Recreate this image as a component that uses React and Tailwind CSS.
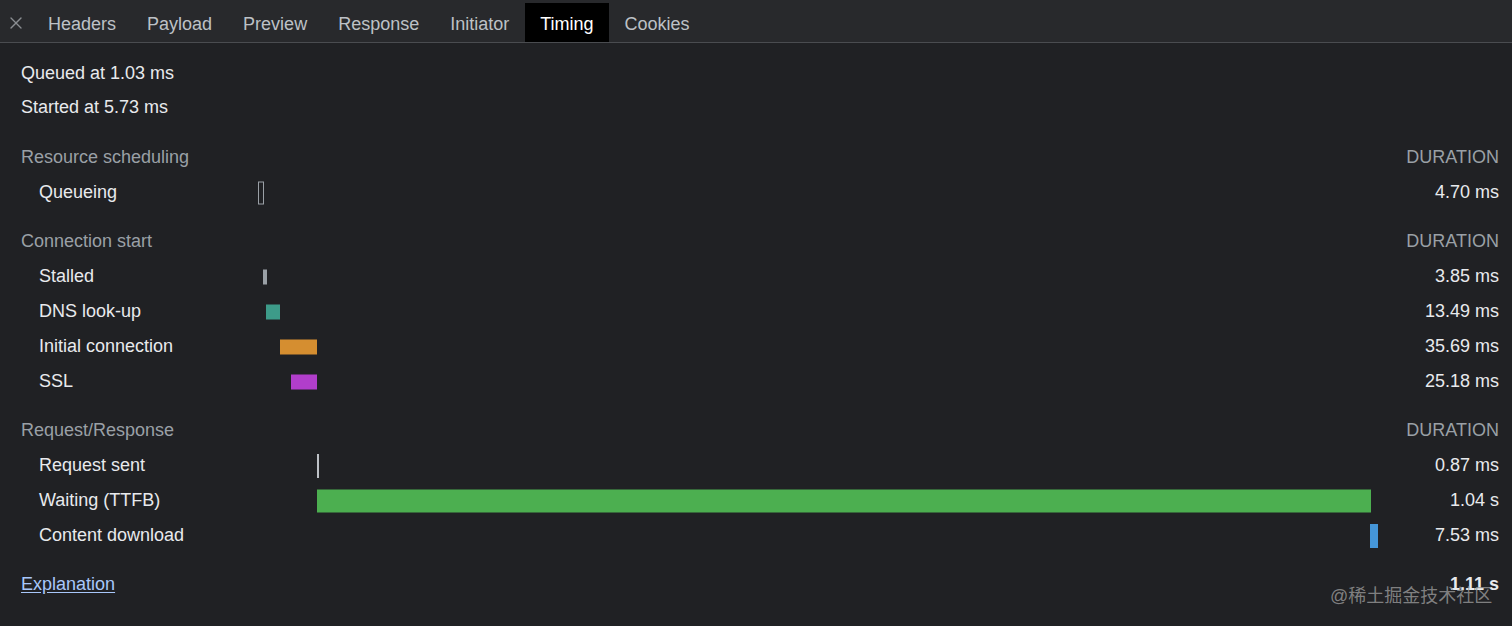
import { X } from "lucide-react";

const tabs = ["Headers", "Payload", "Preview", "Response", "Initiator", "Timing", "Cookies"];

const sections = [
  {
    title: "Resource scheduling",
    rows: [
      { label: "Queueing", dur: "4.70 ms", left: 0, width: 5.5, h: 23, kind: "hollow" },
    ],
  },
  {
    title: "Connection start",
    rows: [
      { label: "Stalled", dur: "3.85 ms", left: 5, width: 4, h: 15, color: "#9aa0a6" },
      { label: "DNS look-up", dur: "13.49 ms", left: 8, width: 14, h: 15, color: "#3d9b89" },
      { label: "Initial connection", dur: "35.69 ms", left: 22, width: 37, h: 15, color: "#d58e30" },
      { label: "SSL", dur: "25.18 ms", left: 33, width: 26, h: 15, color: "#b13ecb" },
    ],
  },
  {
    title: "Request/Response",
    rows: [
      { label: "Request sent", dur: "0.87 ms", left: 59, width: 1.5, h: 24, color: "#bdc1c6" },
      { label: "Waiting (TTFB)", dur: "1.04 s", left: 59, width: 1054, h: 23, color: "#4caf50" },
      { label: "Content download", dur: "7.53 ms", left: 1112, width: 8, h: 24, color: "#4596d8" },
    ],
  },
];

function Bar({ row }) {
  if (row.kind === "hollow") {
    return (
      <div
        className="absolute top-1/2 -translate-y-1/2 border border-[#9aa0a6]"
        style={{ left: row.left, width: row.width, height: row.h }}
      />
    );
  }
  return (
    <div
      className="absolute top-1/2 -translate-y-1/2"
      style={{ left: row.left, width: row.width, height: row.h, background: row.color }}
    />
  );
}

export default function App() {
  return (
    <div className="w-[1512px] h-[626px] bg-[#202124] text-[18px] text-[#e8eaed] font-['Liberation_Sans',Arial,sans-serif] overflow-hidden relative">
      <div className="h-[43px] flex items-end bg-[#28292c] border-b border-[#4a4c50]">
        <div className="w-[32.5px] h-[39px] pt-[1px] flex items-center justify-center text-[#8a8d91]">
          <X size={20} strokeWidth={1.6} />
        </div>
        {tabs.map((t) => (
          <div
            key={t}
            className={
              t === "Timing"
                ? "h-[39px] pt-[3px] px-[15.5px] flex items-center bg-black text-white"
                : "h-[39px] pt-[3px] px-[15.5px] flex items-center text-[#bdc1c6]"
            }
          >
            {t}
          </div>
        ))}
      </div>

      <div className="pl-[21px] pr-[13px] pt-[13px]">
        <div className="h-[34px] flex items-center">Queued at 1.03 ms</div>
        <div className="h-[34px] flex items-center">Started at 5.73 ms</div>

        {sections.map((s, i) => (
          <div key={s.title} className={i === 0 ? "mt-[16px]" : "mt-[14px]"}>
            <div className="h-[35px] flex items-center justify-between text-[#9aa0a6]">
              <span>{s.title}</span>
              <span>DURATION</span>
            </div>
            {s.rows.map((r) => (
              <div key={r.label} className="h-[35px] flex items-center">
                <div className="w-[237px] pl-[18px]">{r.label}</div>
                <div className="w-[1120px] h-full relative">
                  <Bar row={r} />
                </div>
                <div className="flex-1 text-right">{r.dur}</div>
              </div>
            ))}
          </div>
        ))}

        <div className="mt-[14px] h-[35px] flex items-center justify-between">
          <a href="#" className="text-[#a8c7fa] underline underline-offset-2">
            Explanation
          </a>
          <span className="font-bold">1.11 s</span>
        </div>
      </div>

      <div className="absolute left-[1330px] top-[583px] text-[18px] text-[#9a9a9a]/80 font-['Liberation_Sans','Noto_Sans_CJK_SC',sans-serif] pointer-events-none">
        @稀土掘金技术社区
      </div>
    </div>
  );
}
